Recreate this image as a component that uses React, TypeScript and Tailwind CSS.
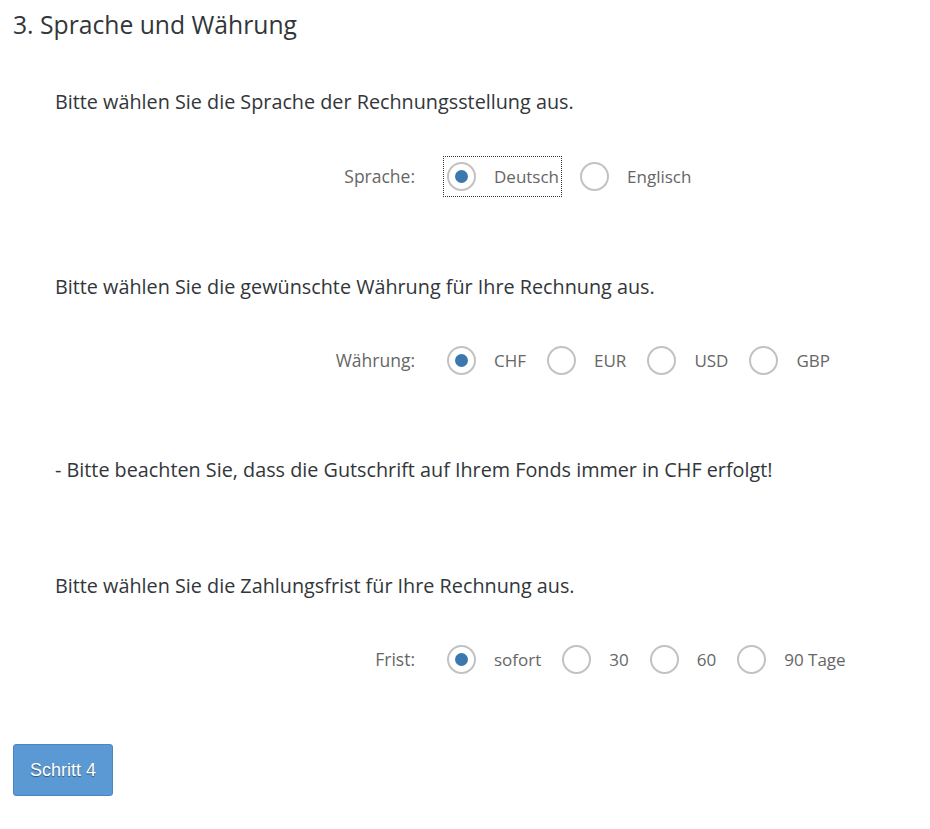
import React, { useState } from "react";

type Option = { value: string; label: string };

const RadioRow = ({
  label,
  options,
  focused,
}: {
  label: string;
  options: Option[];
  focused?: boolean;
}) => {
  const [selected, setSelected] = useState(options[0].value);
  return (
    <div className="flex items-center h-[39px]">
      <div className="w-[389px] pr-[29px] text-right text-[17.5px] text-[#666666]">{label}</div>
      <div className="flex items-center">
        {options.map((o, i) => {
          const active = o.value === selected;
          return (
            <button
              key={o.value}
              onClick={() => setSelected(o.value)}
              className={
                "flex items-center h-[39px] pl-[3px] pr-[2px] " +
                (i > 0 ? "ml-[16px] " : "") +
                (active && focused ? "outline outline-1 outline-dotted outline-[#333]" : "")
              }
            >
              <span className="w-[29px] h-[29px] rounded-full border-2 border-[#c2c2c2] bg-white flex items-center justify-center">
                {active && <span className="w-[13px] h-[13px] rounded-full bg-[#3b78ad]" />}
              </span>
              <span className="ml-[18px] text-[17px] text-[#666666]">{o.label}</span>
            </button>
          );
        })}
      </div>
    </div>
  );
};

export default function App() {
  return (
    <div
      className="bg-white min-h-[829px] pl-[13px] pt-[9px] text-[#32363a]"
      style={{ fontFamily: '"Open Sans", "Noto Sans", sans-serif' }}
    >
      <h2 className="text-[24.7px] leading-[32px] text-[#32363a]">3. Sprache und Währung</h2>

      <div className="pl-[42px]">
        <p className="mt-[49px] text-[19.8px] leading-[24px]">
          Bitte wählen Sie die Sprache der Rechnungsstellung aus.
        </p>
        <div className="mt-[43px]">
          <RadioRow
            label="Sprache:"
            focused
            options={[
              { value: "de", label: "Deutsch" },
              { value: "en", label: "Englisch" },
            ]}
          />
        </div>

        <p className="mt-[79px] text-[19.8px] leading-[24px]">
          Bitte wählen Sie die gewünschte Währung für Ihre Rechnung aus.
        </p>
        <div className="mt-[42px]">
          <RadioRow
            label="Währung:"
            options={[
              { value: "chf", label: "CHF" },
              { value: "eur", label: "EUR" },
              { value: "usd", label: "USD" },
              { value: "gbp", label: "GBP" },
            ]}
          />
        </div>

        <p className="mt-[78px] text-[19.8px] leading-[24px]">
          - Bitte beachten Sie, dass die Gutschrift auf Ihrem Fonds immer in CHF erfolgt!
        </p>

        <p className="mt-[92px] text-[19.8px] leading-[24px]">
          Bitte wählen Sie die Zahlungsfrist für Ihre Rechnung aus.
        </p>
        <div className="mt-[42px]">
          <RadioRow
            label="Frist:"
            options={[
              { value: "0", label: "sofort" },
              { value: "30", label: "30" },
              { value: "60", label: "60" },
              { value: "90", label: "90 Tage" },
            ]}
          />
        </div>
      </div>

      <button
        className="mt-[65px] w-[100px] h-[52px] rounded-[3px] border border-[#4a87c2] bg-[#5a99d3] text-white text-[18px] [text-shadow:0_1px_1px_rgba(0,0,0,0.45)]"
        style={{ fontFamily: '"Liberation Sans", Arial, sans-serif' }}
      >
        Schritt 4
      </button>
    </div>
  );
}
